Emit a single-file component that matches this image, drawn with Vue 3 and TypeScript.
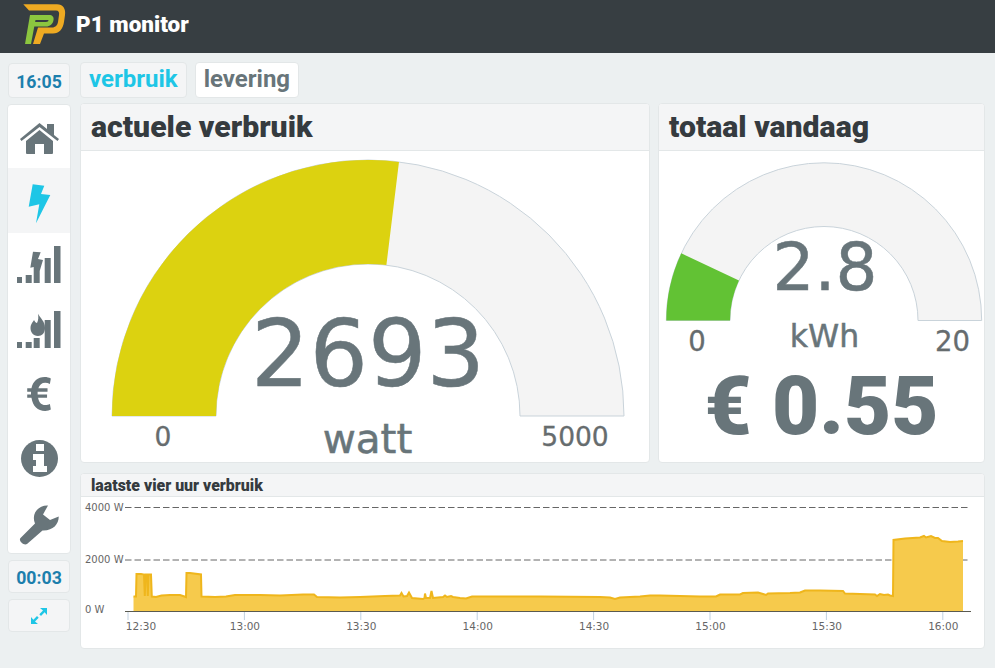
<script setup lang="ts">
const sideIcons = ['home', 'bolt', 'barsbolt', 'barsflame', 'euro', 'info', 'wrench']

function arc(cx: number, cy: number, ro: number, ri: number, f: number): string {
  const a = Math.PI * (1 - f)
  const ox = cx + ro * Math.cos(a), oy = cy - ro * Math.sin(a)
  const ix = cx + ri * Math.cos(a), iy = cy - ri * Math.sin(a)
  return `M${cx - ro} ${cy}A${ro} ${ro} 0 0 1 ${ox.toFixed(2)} ${oy.toFixed(2)}L${ix.toFixed(2)} ${iy.toFixed(2)}A${ri} ${ri} 0 0 0 ${cx - ri} ${cy}Z`
}
const g1Bg = arc(287, 265, 256, 152, 1)
const g1Val = arc(287, 265, 256, 152, 0.5386)
const g2Bg = arc(165, 169.5, 157.7, 94, 1)
const g2Val = arc(165, 169.5, 157.7, 94, 0.14)

const ticks = ['12:30', '13:00', '13:30', '14:00', '14:30', '15:00', '15:30', '16:00'].map((t, i) => {
  const x = 128 + i * 116.4
  return { t, x, lx: i === 0 ? 141 : x + 0.5 }
})
const pts: [number, number][] = [
  [133.5, 596.5], [136, 596.5], [136.5, 574], [141, 574], [144, 574.5], [144.8, 596], [145.5, 574.5], [147, 574.5], [147.8, 596], [148.5, 574.5], [151, 574.5], [151.8, 596.5], [156, 597], [161.5, 595.5], [170, 595], [180, 595], [186, 597], [186.5, 573], [190, 573], [201, 574.5], [201.5, 596.5], [215, 597], [226, 596.5], [235, 595], [260, 595], [280, 595.5], [303, 594.5], [314, 594.5], [317, 597], [340, 597.5], [360, 597], [385, 596], [400, 595.5], [401.5, 593], [403.5, 596.5], [407, 596], [409, 592.5], [412, 598], [423, 599], [424.5, 598], [425, 593.5], [426, 598], [430, 598], [431.5, 591], [433, 598], [443, 597], [445, 595.5], [447, 597], [451, 596], [453, 597], [460, 598], [466, 598.5], [472, 596.5], [500, 596.5], [540, 596.5], [600, 597], [610, 597.5], [615, 599], [620, 597.5], [640, 596.5], [650, 595.5], [660, 595.5], [700, 596.5], [716, 596.5], [720, 594.5], [740, 594.5], [743, 593], [758, 592.5], [763, 594], [766, 595], [768, 593.5], [790, 593], [800, 592.5], [805, 590.5], [820, 590.5], [843, 591], [845, 593.5], [875, 594.5], [877, 596], [880, 594], [884, 595], [888, 594.5], [890, 595.5], [893, 596], [893.5, 540], [905, 538.5], [920, 537.5], [924, 536], [926, 537.5], [931, 536], [935, 538], [938, 538], [942, 541], [950, 542], [958, 541.5], [963, 541],
]
const top = pts.map((p) => `L${p[0]} ${p[1]}`).join('')
const areaD = `M133.5 611${top}L963 611Z`
const lineTop = 'M' + top.slice(1)
</script>

<template>
  <div class="page">
    <header class="topbar">
      <svg class="logo" width="48" height="48" viewBox="20 0 48 48">
        <path d="M23.300 4.300H57C63 4.300 66 9 65 15L64 22C63 29 59 33.500 53 33.500H44L40 44H33L38 27.500H52C55.500 27.500 57.500 25 58 22L59 15C59.500 12 58.500 10.500 56 10.500H29Z" fill="#eeaa22" />
        <path d="M25 44L30 15H49C52.500 15 54 17 53.500 20C53 24 50 26.500 46 26.500H34L35 22H46C47.500 22 48.500 21 48.500 20.500C48.500 20 48 20 47 20H35.500L31 44Z" fill="#8cc63f" />
      </svg>
      <span class="brand">P1 monitor</span>
    </header>

    <div class="shell">
      <aside class="side">
        <div class="chip clock">16:05</div>
        <nav class="menu">
          <div v-for="ic in sideIcons" :key="ic" class="item" :class="[ic, { on: ic === 'bolt' }]">
            <svg v-if="ic === 'home'" width="39" height="31" viewBox="0 0 39 31" fill="#68757a">
              <path d="M0 16L19.500 0L27 6V1H34V12L39 16L37.500 18L19.500 4L1.500 18Z" />
              <path d="M19.500 7L6 18V30A1 1 0 0 0 7 31H15V21H24V31H32A1 1 0 0 0 33 30V18Z" />
            </svg>
            <svg v-else-if="ic === 'bolt'" width="23" height="40" viewBox="0 0 23 40" fill="#1ec6e6">
              <path d="M4.700 .3L16.300 1.700L13 10L22.300 11L8 39.300L11.300 20.300L.7 22.700Z" />
            </svg>
            <svg v-else-if="ic === 'barsbolt'" width="44" height="37" viewBox="0 0 44 37" fill="#68757a">
              <rect x="0" y="31" width="5" height="6" /><rect x="8.700" y="29" width="6" height="8" />
              <path d="M16 5.700L23.700 6.300L21 13L26 14L22.700 25V37H16.700V21L13.300 21.700Z" />
              <rect x="27.700" y="12" width="6" height="25" /><rect x="37" y="0" width="6.500" height="37" />
            </svg>
            <svg v-else-if="ic === 'barsflame'" width="44" height="37" viewBox="0 0 44 37" fill="#68757a">
              <rect x="0" y="31" width="5" height="6" /><rect x="8.700" y="31" width="6" height="6" />
              <path d="M21 2.700C23 7 28 10 28 17C28 22 25 25 21 25C16 25 13.500 21 13.500 17C13.500 13 16 11 17 9C18 11 19 12 20 12C21.500 9 21.500 6 21 2.700Z" />
              <rect x="16.700" y="27" width="6" height="10" /><rect x="27.700" y="9" width="6" height="28" /><rect x="37" y="0" width="6.500" height="37" />
            </svg>
            <svg v-else-if="ic === 'euro'" width="25" height="34" viewBox="0 0 26 36" fill="#68757a">
              <path d="M25 1.500C23 .6 21 0 18.500 0C11 0 6 4.500 4.500 12H0V15.500H4C4 16.500 4 17.500 4 18.500H0V22H4.500C6 31 11 36 19 36C21.500 36 23.500 35.500 25 34.500L24 28.500C22.500 29.300 21 29.700 19 29.700C15 29.700 12.500 27 11.500 22H21V18.500H11C11 17.500 11 16.500 11 15.500H21.500V12H11.800C13 8 15.500 6 19 6C20.800 6 22.500 6.500 24 7.300Z" />
            </svg>
            <svg v-else-if="ic === 'info'" width="37" height="37" viewBox="0 0 37 37">
              <circle cx="18.500" cy="18.500" r="18.500" fill="#68757a" />
              <path d="M15 4H23V11H15ZM12 14H23V26H26V32H12V26H15V20H12Z" fill="#fff" />
            </svg>
            <svg v-else width="40" height="40" viewBox="0 0 40 40" fill="#68757a">
              <path d="M29 .5L24 9.500L31 15L39.700 11.500C40 19 34 26 23.500 25.500L8 39C5 41 -1 36 1.500 33L16 18.500C12 9 19 0 29 .5Z" />
            </svg>
          </div>
        </nav>
        <div class="chip clock count">00:03</div>
        <div class="chip expand">
          <svg width="16" height="16" viewBox="0 0 16 16" fill="#1ec6e6" stroke="none">
            <path d="M9 0H16V7L13.600 4.200L10 8L8.300 6.300L12 2.500Z" />
            <path d="M7 16H0V9L2.400 11.800L6 8L7.700 9.700L4 13.500Z" />
          </svg>
        </div>
      </aside>

      <main class="main">
        <div class="tabs">
          <div class="tab active">verbruik</div>
          <div class="tab">levering</div>
        </div>

        <div class="row">
          <section class="panel big">
            <h2 class="panel-h">actuele verbruik</h2>
            <svg class="g1" width="568" height="311" viewBox="0 0 568 311">
              <path :d="g1Bg" fill="#f4f4f4" stroke="#c9d3da" stroke-width="1" />
              <path :d="g1Val" fill="#dcd210" />
              <text x="287" y="235" class="gv" font-size="92" text-anchor="middle">2693</text>
              <text x="286.500" y="302" class="gv" font-size="40.500" text-anchor="middle">watt</text>
              <text x="82" y="295" class="gl" font-size="26.500" text-anchor="middle">0</text>
              <text x="494" y="295" class="gl" font-size="26.500" text-anchor="middle">5000</text>
            </svg>
          </section>
          <section class="panel small">
            <h2 class="panel-h">totaal vandaag</h2>
            <svg class="g2" width="325" height="208" viewBox="0 0 325 208">
              <path :d="g2Bg" fill="#f4f4f4" stroke="#c9d3da" stroke-width="1" />
              <path :d="g2Val" fill="#62c234" />
              <text x="166" y="139" class="gv" font-size="66" text-anchor="middle">2.8</text>
              <text x="165.500" y="196" class="gv" font-size="31.500" text-anchor="middle">kWh</text>
              <text x="38" y="200" class="gl" font-size="27.500" text-anchor="middle">0</text>
              <text x="293.500" y="200" class="gl" font-size="27.500" text-anchor="middle">20</text>
            </svg>
            <div class="cost">€ 0.55</div>
          </section>
        </div>

        <section class="panel chart">
          <h3 class="panel-h thin">laatste vier uur verbruik</h3>
          <svg class="plot" width="903" height="151" viewBox="81 497 903 151">
            <g class="axis-l">
              <text x="85" y="511">4000 W</text>
              <text x="85" y="563">2000 W</text>
              <text x="85" y="613">0 W</text>
            </g>
            <path d="M125 507.500H970M125 560H970" stroke="#666" stroke-dasharray="6.500 3" fill="none" />
            <path :d="areaD" fill="#f6ca4c" />
            <path :d="lineTop" fill="none" stroke="#efb61c" stroke-width="2" />
            <path d="M125 611.500H971" stroke="#5a5a50" />
            <g v-for="k in ticks" :key="k.t">
              <path :d="`M${k.x} 612V620`" stroke="#c0d0e0" />
              <text :x="k.lx" y="630" text-anchor="middle" class="tick">{{ k.t }}</text>
            </g>
          </svg>
        </section>
      </main>
    </div>
  </div>
</template>

<style>
html, body { margin: 0; background: #ecf0f1; }
</style>

<style scoped>
.page {
  width: 995px;
  height: 668px;
  background: #ecf0f1;
  font-family: Roboto, "Liberation Sans", sans-serif;
  overflow: hidden;
}
.topbar {
  height: 53px;
  background: #373e42;
  display: flex;
  align-items: center;
  padding: 0 0 5px 20px;
  box-sizing: border-box;
}
.logo { margin-right: 8px; flex: none; }
.brand { color: #fff; font-weight: 900; font-size: 22.500px; }
.shell { display: flex; padding: 9px 10px 0 7px; gap: 9px; }
.side { width: 64px; display: flex; flex-direction: column; align-items: center; padding-top: 1px; flex: none; }
.chip {
  width: 62px;
  box-sizing: border-box;
  background: #f4f5f6;
  border: 1px solid #e3e7e8;
  border-radius: 4px;
  display: flex;
  align-items: center;
  justify-content: center;
}
.clock { height: 35px; padding-top: 3px; color: #1c7fad; font-weight: 700; font-size: 17.700px; }
.menu {
  width: 64px;
  margin-top: 6px;
  background: #fff;
  border: 1px solid #e3e7e8;
  border-radius: 4px;
  box-sizing: border-box;
  height: 450px;
  display: flex;
  flex-direction: column;
}
.item { height: 64.500px; flex: none; display: flex; align-items: center; justify-content: center; }
.item:first-child { height: 63px; }
.item.on { background: #f4f5f6; }
.home svg { margin-top: 3px; }
.bolt svg { margin-top: 8px; }
.wrench svg { margin-top: 5px; }
.count { height: 33px; margin-top: 6px; }
.expand { height: 33px; margin-top: 6px; }
.main { width: 905px; flex: none; display: flex; flex-direction: column; }
.tabs { display: flex; gap: 8px; height: 36px; }
.tab {
  background: #fff;
  border: 1px solid #e3e7e8;
  border-radius: 4px;
  padding: 0 8px 3px;
  font-size: 24px;
  font-weight: 700;
  color: #68757a;
  display: flex;
  align-items: center;
  box-sizing: border-box;
}
.tab.active { background: #f4f5f6; color: #1ec6e6; }
.row { display: flex; gap: 8px; margin-top: 5px; height: 360px; }
.panel {
  background: #fff;
  border: 1px solid #e3e7e8;
  border-radius: 4px;
  box-sizing: border-box;
  overflow: hidden;
}
.big { width: 570px; }
.small { width: 327px; }
.panel-h {
  margin: 0;
  background: #f4f5f6;
  border-bottom: 1px solid #e3e7e8;
  height: 47px;
  box-sizing: border-box;
  display: flex;
  align-items: center;
  padding: 0 0 2px 10px;
  font-size: 30.200px;
  font-weight: 900;
  color: #353b3f;
}
.panel-h.thin { height: 23px; padding-bottom: 0; font-size: 15.900px; }
.g1, .g2, .plot { display: block; }
.gv { font-family: "DejaVu Sans", sans-serif; fill: #68757a; stroke: #68757a; stroke-width: .5px; }
.gl { font-family: "DejaVu Sans", sans-serif; fill: #666c6e; stroke: #666c6e; stroke-width: .3px; }
.cost {
  margin-top: 7px;
  text-align: center;
  font-weight: 900;
  font-size: 81.500px;
  line-height: 81.500px;
  color: #68757a;
}
.chart { margin-top: 10px; height: 176px; }
.axis-l text { font-family: "DejaVu Sans", sans-serif; font-size: 10px; fill: #666; }
.tick { font-family: "DejaVu Sans", sans-serif; font-size: 10.500px; fill: #666; }
</style>
